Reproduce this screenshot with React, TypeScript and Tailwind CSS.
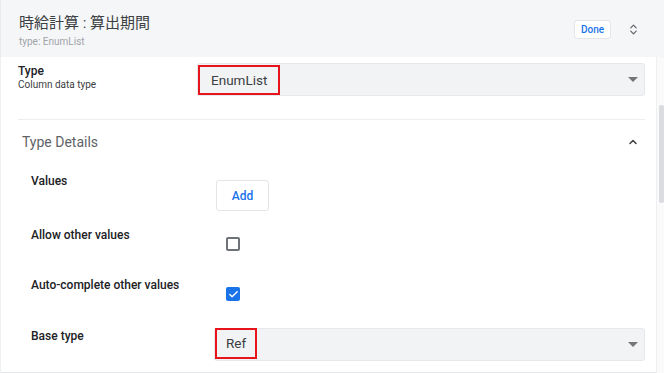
import { ChevronsUpDown, ChevronUp, Check } from "lucide-react";

const font = { fontFamily: "Roboto, 'Noto Sans CJK JP', 'Liberation Sans', sans-serif" };

function Caret() {
  return (
    <svg width="10" height="5" viewBox="0 0 10 5" className="shrink-0">
      <path d="M0 0 L10 0 L5 5 Z" fill="#757575" />
    </svg>
  );
}

function SelectBox({ value, boxClass }: { value: string; boxClass: string }) {
  return (
    <div className="flex h-[33px] flex-1 items-start justify-between rounded-[3px] border border-[#e6e8eb] bg-[#f1f3f4] pr-[6px]">
      <span
        className={`flex items-center border-2 border-[#e8141c] text-[13.5px] text-[#3c4043] ${boxClass}`}
      >
        {value}
      </span>
      <div className="self-center">
        <Caret />
      </div>
    </div>
  );
}

function Checkbox({ checked }: { checked: boolean }) {
  return checked ? (
    <div className="flex h-[14px] w-[14px] items-center justify-center rounded-[2px] bg-[#1a73e8]">
      <Check size={11} strokeWidth={3} color="#ffffff" />
    </div>
  ) : (
    <div className="h-[14px] w-[14px] rounded-[2px] border-2 border-[#6f7378]" />
  );
}

export default function App() {
  return (
    <div className="flex h-[373px] w-[664px] flex-col overflow-hidden bg-white" style={font}>
      {/* header */}
      <header className="flex h-[57px] shrink-0 items-start border-l border-[#e9ebee] bg-[#f5f6f8] pl-[18px] pr-[24px]">
        <div className="flex-1 pt-[13px]">
          <div className="text-[15px] leading-[20px] text-[#3c4043]">時給計算 : 算出期間</div>
          <div className="mt-[3px] text-[10px] leading-[12px] text-[#a0a4a8]">type: EnumList</div>
        </div>
        <button className="mt-[20px] h-[19px] w-[37px] rounded-[3px] border border-[#e3e5e8] bg-white text-[10px] font-medium leading-none text-[#1a73e8]">
          Done
        </button>
        <div className="ml-[16px] mt-[23px]">
          <ChevronsUpDown size={13} strokeWidth={2.2} color="#5f6368" />
        </div>
      </header>

      {/* body */}
      <div className="flex flex-1 border-l border-[#eef0f2]">
        <main className="flex-1 border-b border-[#e6e8eb] pl-[17px] pr-[11px]">
          {/* Type row */}
          <div className="flex h-[62px] items-start">
            <div className="w-[179px] shrink-0 pt-[6px]">
              <div className="text-[12px] font-medium leading-[16px] text-[#202124]">Type</div>
              <div className="text-[10px] leading-[12px] text-[#3c4043]">Column data type</div>
            </div>
            <div className="mt-[6px] flex flex-1">
              <SelectBox value="EnumList" boxClass="mt-[1px] h-[30px] px-[11px]" />
            </div>
          </div>

          <div className="h-px bg-[#eceef0]" />

          {/* Type Details */}
          <div className="flex h-[52px] items-start justify-between pl-[4px] pr-[6px] pt-[12px]">
            <span className="text-[14px] leading-[20px] text-[#5f6368]">Type Details</span>
            <div className="pt-[4px]">
              <ChevronUp size={12} strokeWidth={3} color="#3c4043" />
            </div>
          </div>

          <div className="pl-[13px]">
            {/* Values */}
            <div className="flex h-[54px] items-start">
              <div className="w-[185px] shrink-0 pt-[1px] text-[12px] font-medium leading-[16px] text-[#202124]">
                Values
              </div>
              <button className="mt-[8px] h-[31px] w-[53px] rounded-[3px] border border-[#e3e5e8] bg-white text-[12px] font-medium text-[#1a73e8]">
                Add
              </button>
            </div>

            {/* Allow other values */}
            <div className="flex h-[50px] items-start">
              <div className="w-[185px] shrink-0 pt-[1px] text-[12px] font-medium leading-[16px] text-[#202124]">
                Allow other values
              </div>
              <div className="ml-[10px] mt-[11px]">
                <Checkbox checked={false} />
              </div>
            </div>

            {/* Auto-complete */}
            <div className="flex h-[50px] items-start">
              <div className="w-[185px] shrink-0 pt-[1px] text-[12px] font-medium leading-[16px] text-[#202124]">
                Auto-complete other values
              </div>
              <div className="ml-[10px] mt-[11px]">
                <Checkbox checked />
              </div>
            </div>

            {/* Base type */}
            <div className="flex items-start">
              <div className="w-[183px] shrink-0 pt-[2px] text-[12px] font-medium leading-[16px] text-[#202124]">
                Base type
              </div>
              <div className="mt-[2px] flex flex-1">
                <SelectBox value="Ref" boxClass="-mt-px h-[31px] px-[9px]" />
              </div>
            </div>
          </div>
        </main>

        {/* scrollbar */}
        <div className="w-[8px] shrink-0 border-l border-[#eeeff1] bg-[#fafafa]">
          <div className="ml-[2px] mt-[48px] h-[98px] w-[5px] rounded-[2px] bg-[#dadce0]" />
        </div>
      </div>
    </div>
  );
}
